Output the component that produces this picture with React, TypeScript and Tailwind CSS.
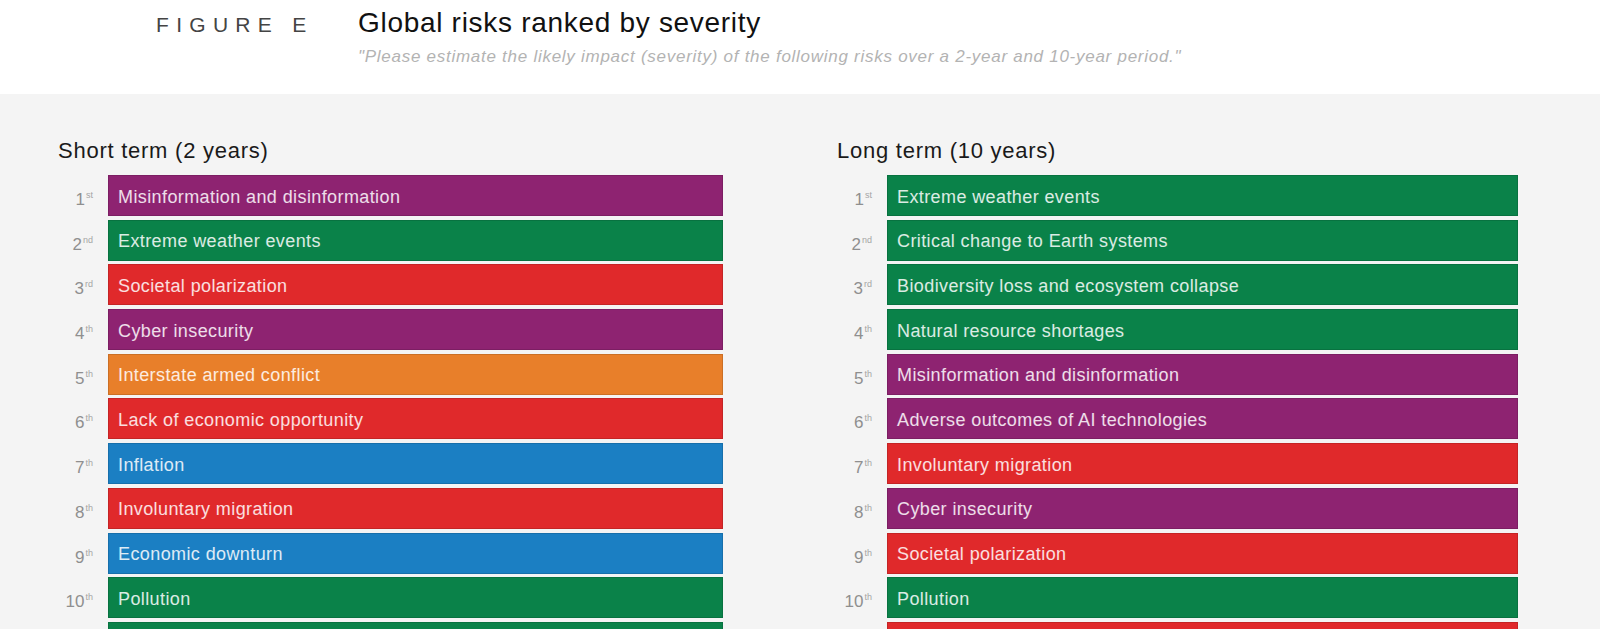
const PURPLE = "bg-[#8e2371]";
const GREEN = "bg-[#0a8249]";
const RED = "bg-[#e0292b]";
const ORANGE = "bg-[#e87f2a]";
const BLUE = "bg-[#1b7fc3]";

type Risk = { label: string; color: string };

// last row of each list is only a sliver at the bottom edge, so it has no label
const shortTerm: Risk[] = [
  { label: "Misinformation and disinformation", color: PURPLE },
  { label: "Extreme weather events", color: GREEN },
  { label: "Societal polarization", color: RED },
  { label: "Cyber insecurity", color: PURPLE },
  { label: "Interstate armed conflict", color: ORANGE },
  { label: "Lack of economic opportunity", color: RED },
  { label: "Inflation", color: BLUE },
  { label: "Involuntary migration", color: RED },
  { label: "Economic downturn", color: BLUE },
  { label: "Pollution", color: GREEN },
  { label: "", color: GREEN },
];

const longTerm: Risk[] = [
  { label: "Extreme weather events", color: GREEN },
  { label: "Critical change to Earth systems", color: GREEN },
  { label: "Biodiversity loss and ecosystem collapse", color: GREEN },
  { label: "Natural resource shortages", color: GREEN },
  { label: "Misinformation and disinformation", color: PURPLE },
  { label: "Adverse outcomes of AI technologies", color: PURPLE },
  { label: "Involuntary migration", color: RED },
  { label: "Cyber insecurity", color: PURPLE },
  { label: "Societal polarization", color: RED },
  { label: "Pollution", color: GREEN },
  { label: "", color: RED },
];

const suffix = (n: number) => (n === 1 ? "st" : n === 2 ? "nd" : n === 3 ? "rd" : "th");

const RiskColumn = ({ title, risks, width }: { title: string; risks: Risk[]; width: string }) => (
  <div className={width}>
    <h2 className="text-[22px] leading-none tracking-[0.75px] text-[#1a1a1a] mb-[13px]">{title}</h2>
    <div className="flex flex-col gap-[3.7px]">
      {risks.map((risk, i) => (
        <div key={i} className="flex">
          <div className="w-[50px] shrink-0 pr-[15px] pt-[16px] text-right text-[17px] leading-none text-[#8f8f8f]">
            {risk.label && (
              <>
                {i + 1}
                <sup className="text-[9px] top-[-7px] ml-[1px] text-[#a5a5a5]">{suffix(i + 1)}</sup>
              </>
            )}
          </div>
          <div
            className={`flex-1 h-[41px] flex items-center pl-[10px] pt-[3px] text-[18px] tracking-[0.4px] text-white/85 shadow-[inset_0_0_0_1px_rgba(0,0,0,0.12)] ${risk.color}`}
          >
            {risk.label}
          </div>
        </div>
      ))}
    </div>
  </div>
);

export default function App() {
  return (
    <div className="w-[1600px] h-[629px] overflow-hidden bg-[#f4f4f4] font-['Liberation_Sans',Arial,sans-serif]">
      <div className="h-[94px] bg-white flex items-baseline pl-[156px] pt-[9px]">
        <div className="w-[202px] shrink-0 text-[21px] leading-none tracking-[7.3px] text-[#444]">FIGURE E</div>
        <div>
          <h1 className="text-[28px] leading-none tracking-[0.7px] text-[#111]">Global risks ranked by severity</h1>
          <p className="mt-[11px] text-[17px] leading-none tracking-[0.73px] italic text-[#b3b3b3]">
            "Please estimate the likely impact (severity) of the following risks over a 2-year and 10-year period."
          </p>
        </div>
      </div>
      <div className="flex pl-[58px] pt-[46px] gap-[114px]">
        <RiskColumn title="Short term (2 years)" risks={shortTerm} width="w-[665px]" />
        <RiskColumn title="Long term (10 years)" risks={longTerm} width="w-[681px]" />
      </div>
    </div>
  );
}
